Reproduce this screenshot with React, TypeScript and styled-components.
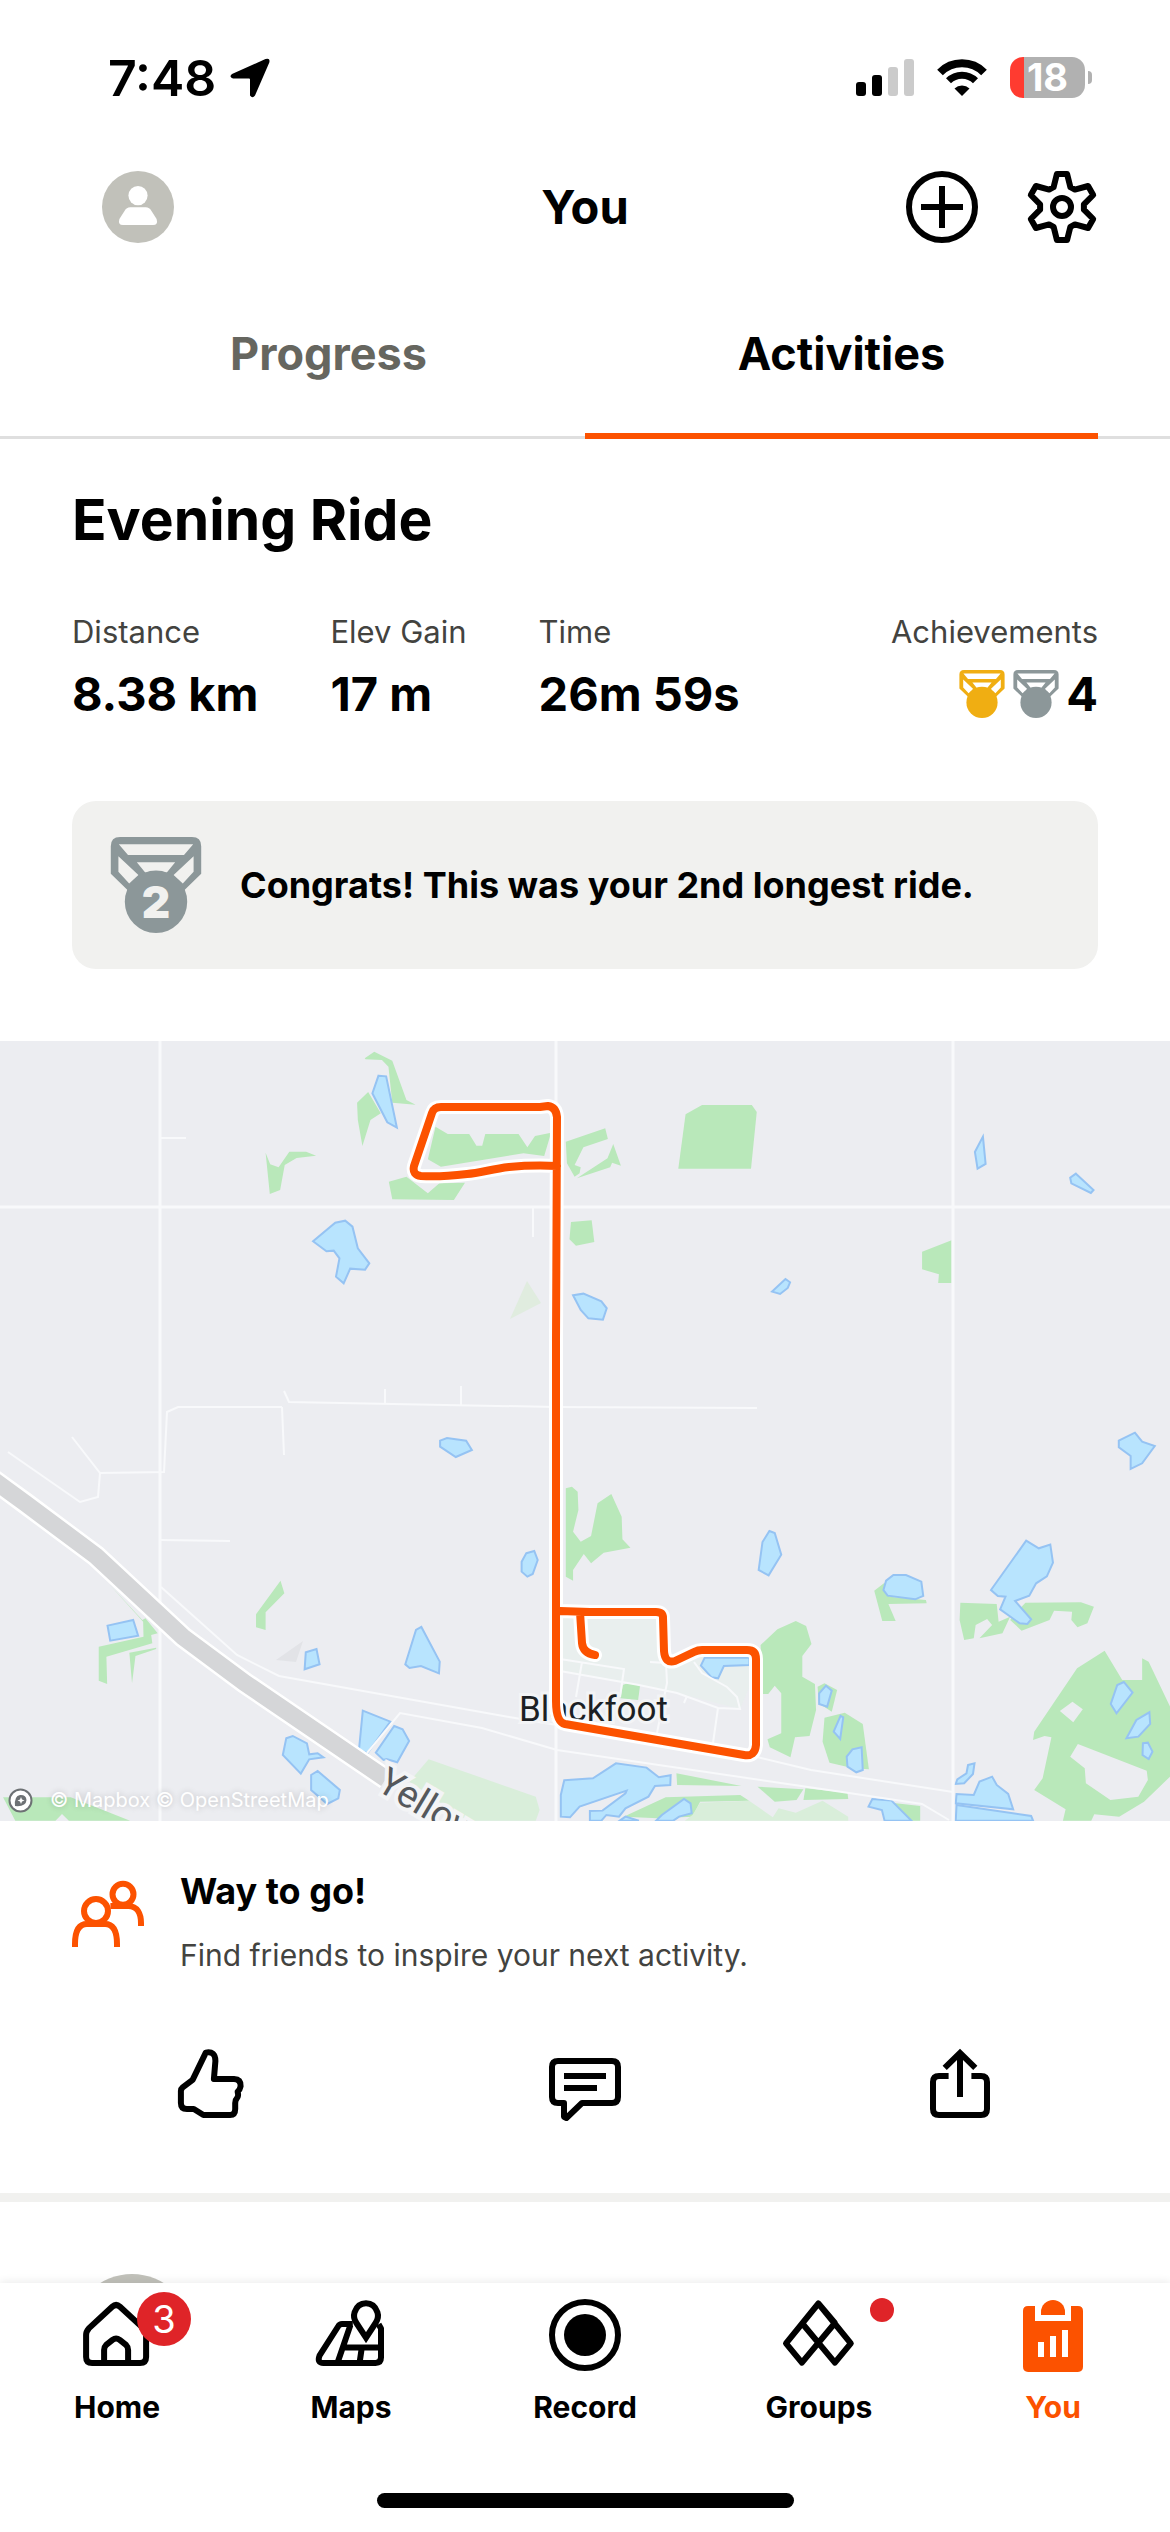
import React from "react";
import styled, { createGlobalStyle } from "styled-components";

const color = {
  ink: "#000000",
  body: "#43433f",
  muted: "#66665f",
  accent: "#fc5200",
  fill: "#f1f1ef",
  line: "#dfdfdf",
  avatar: "#c1c1ba",
  gold: "#f0ae12",
  silver: "#8c9799",
  alert: "#df2428",
};

const GlobalStyle = createGlobalStyle`
  *, *::before, *::after { box-sizing: border-box; }
  body {
    margin: 0;
    background: #fff;
    color: ${color.ink};
    font-family: Inter, Roboto, sans-serif;
  }
  h1, h2, h3, p, dl, dt, dd { margin: 0; }
`;

/* ---------- shell ---------- */

const Shell = styled.div`
  display: flex;
  flex-direction: column;
  height: 100vh;
  overflow: hidden;
  background: #fff;
`;

const Feed = styled.main`
  flex: 1;
  min-height: 0;
  overflow-y: auto;
  scrollbar-width: none;
`;

/* ---------- status bar ---------- */

const StatusBar = styled.div`
  display: flex;
  align-items: center;
  justify-content: space-between;
  height: 141px;
  padding: 14px 78px 0 108px;
`;

const StatusGroup = styled.div`
  display: flex;
  align-items: center;
  gap: ${(p: { $gap: number }) => p.$gap}px;
`;

const Clock = styled.span`
  font-size: 50px;
  line-height: 56px;
  font-weight: 600;
`;

const Battery = styled.div`
  display: flex;
  align-items: center;
  justify-content: center;
  width: 75px;
  height: 41px;
  border-radius: 13px;
  background: linear-gradient(to right, #ff3b30 14px, #b1b1b1 14px);
  color: #fff;
  font-size: 38px;
  line-height: 41px;
  font-weight: 700;
`;

const BatteryTip = styled.span`
  width: 4px;
  height: 13px;
  margin-left: 3px;
  border-radius: 0 6px 6px 0;
  background: #b1b1b1;
`;

const BatteryWrap = styled.div`
  display: flex;
  align-items: center;
`;

/* ---------- header and tabs ---------- */

const Header = styled.header`
  display: grid;
  grid-template-columns: 1fr auto 1fr;
  align-items: center;
  height: 132px;
  padding: 0 72px 0 102px;
`;

const HeaderTitle = styled.h1`
  font-size: 47px;
  line-height: 60px;
  font-weight: 700;
  padding-right: 30px;
`;

const HeaderActions = styled.div`
  display: flex;
  justify-content: flex-end;
  gap: 48px;
`;

const IconButton = styled.button`
  display: inline-flex;
  justify-self: start;
  padding: 0;
  border: 0;
  background: none;
  color: inherit;
  cursor: pointer;
`;

const Tabs = styled.div`
  display: grid;
  grid-template-columns: 1fr 1fr;
  height: 166px;
  padding: 0 72px;
  background: linear-gradient(to top, ${color.line} 3px, transparent 3px);
`;

const Tab = styled.button`
  padding: 0;
  border: 0;
  border-bottom: 6px solid ${(p: { $active?: boolean }) => (p.$active ? color.accent : "transparent")};
  background: none;
  color: ${(p) => (p.$active ? color.ink : color.muted)};
  font-family: inherit;
  font-size: 45px;
  font-weight: 700;
  cursor: pointer;
`;

/* ---------- activity ---------- */

const Summary = styled.section`
  padding: 45px 72px 72px;
`;

const ActivityTitle = styled.h2`
  font-size: 57px;
  line-height: 72px;
  font-weight: 700;
`;

const Stats = styled.dl`
  display: flex;
  gap: 72px;
  margin-top: 56px;
`;

const Stat = styled.div`
  display: flex;
  flex-direction: column;
  gap: 14px;
  align-items: ${(p: { $end?: boolean }) => (p.$end ? "flex-end" : "flex-start")};
  margin-left: ${(p) => (p.$end ? "auto" : "0")};
`;

const StatLabel = styled.dt`
  color: ${color.body};
  font-size: 31px;
  line-height: 40px;
`;

const StatValue = styled.dd`
  display: flex;
  align-items: center;
  gap: 6px;
  font-size: 47px;
  line-height: 56px;
  font-weight: 700;
`;

const Banner = styled.div`
  display: flex;
  align-items: center;
  gap: 36px;
  height: 168px;
  margin-top: 79px;
  padding: 0 36px;
  border-radius: 24px;
  background: ${color.fill};
`;

const BannerText = styled.p`
  font-size: 36px;
  line-height: 48px;
  font-weight: 700;
`;

const MapFrame = styled.figure`
  position: relative;
  margin: 0;
  overflow: hidden;

  > svg {
    display: block;
    width: 100%;
    height: auto;
  }
`;

const Attribution = styled.figcaption`
  position: absolute;
  left: 8px;
  bottom: 7px;
  display: flex;
  align-items: center;
  gap: 17px;
  color: #fff;
  font-size: 20px;
  line-height: 28px;
  text-shadow: 0 0 6px rgba(0, 0, 0, 0.2);
`;

const Prompt = styled.section`
  display: flex;
  gap: 36px;
  padding: 46px 72px 0;
`;

const PromptIcon = styled.span`
  display: flex;
  padding-top: 11px;
  color: ${color.accent};
`;

const PromptCopy = styled.div`
  display: flex;
  flex-direction: column;
  gap: 20px;
`;

const PromptTitle = styled.h3`
  font-size: 36px;
  line-height: 48px;
  font-weight: 700;
`;

const PromptText = styled.p`
  color: ${color.body};
  font-size: 30px;
  line-height: 40px;
`;

const Actions = styled.div`
  display: grid;
  grid-template-columns: repeat(3, 1fr);
  padding: 74px 22px 72px;

  > button {
    justify-self: center;
  }
`;

const Divider = styled.hr`
  height: 9px;
  margin: 0;
  border: 0;
  background: ${color.fill};
`;

const NextCard = styled.section`
  padding: 72px;
`;

const NextAvatar = styled.div`
  width: 120px;
  height: 120px;
  border-radius: 50%;
  background: ${color.avatar};
`;

/* ---------- bottom navigation ---------- */

const BottomBar = styled.footer`
  position: relative;
  background: #fff;
  box-shadow: 0 -2px 8px rgba(0, 0, 0, 0.07);
`;

const NavList = styled.nav`
  display: grid;
  grid-template-columns: repeat(5, 1fr);
  padding-top: 16px;
`;

const NavLink = styled.a`
  display: flex;
  flex-direction: column;
  align-items: center;
  gap: 16px;
  color: ${(p: { $active?: boolean }) => (p.$active ? color.accent : color.ink)};
  font-size: 30px;
  line-height: 40px;
  font-weight: 700;
  text-decoration: none;
`;

const NavIcon = styled.span`
  position: relative;
  display: flex;
`;

const CountBadge = styled.span`
  position: absolute;
  top: -7px;
  left: 56px;
  width: 54px;
  height: 54px;
  border-radius: 50%;
  background: ${color.alert};
  color: #fff;
  font-size: 38px;
  line-height: 54px;
  font-weight: 400;
  text-align: center;
`;

const DotBadge = styled.span`
  position: absolute;
  top: -1px;
  left: 87px;
  width: 24px;
  height: 24px;
  border-radius: 50%;
  background: ${color.alert};
`;

const HomeIndicator = styled.div`
  width: 417px;
  height: 15px;
  margin: 66px auto 24px;
  border-radius: 8px;
  background: #000;
`;

/* ---------- icons ---------- */

function Icon({ size = 72, children }: { size?: number; children: React.ReactNode }) {
  return (
    <svg
      width={size}
      height={size}
      viewBox="0 0 24 24"
      fill="none"
      stroke="currentColor"
      strokeWidth={2}
      strokeLinejoin="round"
      overflow="visible"
      aria-hidden="true"
    >
      {children}
    </svg>
  );
}

const PlusIcon = () => (
  <Icon>
    <circle cx="12" cy="12" r="11" />
    <path d="M12 5V19M5 12H19" />
  </Icon>
);

const GearIcon = () => (
  <Icon>
    <path d="M10.3 1H13.7L14.8 5.4L16.3 6.2L20.7 5L22.4 8L19.3 11.1V12.9L22.4 16L20.7 19L16.3 17.8L14.8 18.6L13.7 23H10.3L9.2 18.6L7.7 17.8L3.3 19L1.6 16L4.7 12.9V11.1L1.6 8L3.3 5L7.7 6.2L9.2 5.4Z" />
    <circle cx="12" cy="12" r="3" />
  </Icon>
);

const AvatarIcon = () => (
  <Icon>
    <g stroke="none">
      <circle cx="12" cy="12" r="12" fill={color.avatar} />
      <circle cx="12" cy="8.2" r="3.2" fill="#fff" />
      <path d="M9.4 12.1H14.6Q15.8 12.1 16.5 13.3L18.2 16Q18.8 18 17 18H7Q5.2 18 5.8 16L7.5 13.3Q8.2 12.1 9.4 12.1Z" fill="#fff" />
    </g>
  </Icon>
);

function Medal({ size, fill, rank }: { size: number; fill: string; rank?: number }) {
  return (
    <Icon size={size}>
      <g stroke="none" fill={fill}>
        <path
          fillRule="evenodd"
          d="M3 0H21Q23.3 0 23.3 2.3V9.2L19 13.4H5L.7 9.2V2.3Q.7 0 3 0ZM2.7 1.8L5 4.5H19L21.3 1.8ZM2.6 4.8V8.7L5.3 11.6L7.6 9.5ZM21.4 4.8V8.7L18.7 11.6L16.4 9.5ZM7.2 6.3L9.3 8.9H14.7L16.8 6.3Z"
        />
        <circle cx="12" cy="16.2" r="7.8" />
        {rank !== undefined && (
          <text x="12" y="20.3" textAnchor="middle" fontSize="11" fontWeight="900" fill={color.fill}>
            {rank}
          </text>
        )}
      </g>
    </Icon>
  );
}

const FriendsIcon = () => (
  <Icon>
    <circle cx="8" cy="11" r="4" />
    <circle cx="17" cy="5.4" r="3.5" />
    <path d="M1 23V22C1 18 2.2 15.3 5 15.3H11C13.8 15.3 15 18 15 22V23" />
    <path d="M12.8 9.3H18.8C21.8 9.3 23 12 23 15V16" />
  </Icon>
);

const KudosIcon = () => (
  <Icon>
    <path d="M10.6 1.2Q13.8.6 13.8 4L13.3 10H20Q22.3 10.1 22.2 12.4Q22 13.6 21.2 14.2Q21.6 15.8 21 16.4Q20.4 17 20.4 18V20Q20.4 22 18.7 22H9.8L6.6 20H4.3Q2.3 20 2.3 18V14Q2.3 13.3 2.9 12.8L6.2 10.3Z" />
  </Icon>
);

const CommentIcon = () => (
  <Icon>
    <path d="M3 4H21Q23 4 23 6V16Q23 18 21 18H11L5.8 23L5 22.6V18H3Q1 18 1 16V6Q1 4 3 4Z" />
    <path d="M5 9H19M5 13H16" />
  </Icon>
);

const ShareIcon = () => (
  <Icon>
    <path d="M8.2 9H5Q3 9 3 11V20Q3 22 5 22H19Q21 22 21 20V11Q21 9 19 9H15.8" />
    <path d="M12 16V1.5M6.9 6.3L12 1.3L17.1 6.3" strokeLinejoin="miter" />
  </Icon>
);

const HomeIcon = () => (
  <Icon>
    <path d="M1.7 12Q1.7 10.8 2.6 9.8L10.4 2.6Q11.7 1.4 13 2.6L20.8 9.8Q21.7 10.8 21.7 12V19.3Q21.7 21.3 19.7 21.3H3.7Q1.7 21.3 1.7 19.3Z" />
    <path d="M7.7 21V17Q7.7 16 8.4 15.3L10.5 13.6Q11.7 12.7 12.9 13.6L15 15.3Q15.7 16 15.7 17V21" />
  </Icon>
);

const MapsIcon = () => (
  <Icon>
    <path d="M17 12.9L13.8 8Q12.6 6.2 13.2 4.4Q14.2 1.4 17 1.4Q19.8 1.4 20.8 4.4Q21.4 6.2 20.2 8Z" strokeLinejoin="miter" />
    <path d="M12.6 8.3H9Q8.2 8.3 7.8 9L1.5 18.9Q.6 21.3 2.8 21.3H20.2Q22 21.3 22 19.5V9.8L21.2 8.4" />
    <path d="M11.8 8.7L7.6 21M9.6 16.2H22M15.6 16.2L14.9 21" />
  </Icon>
);

const RecordIcon = () => (
  <Icon>
    <circle cx="12" cy="12" r="11" />
    <circle cx="12" cy="12" r="7" fill="currentColor" stroke="none" />
  </Icon>
);

const GroupsIcon = () => (
  <Icon>
    <path d="M11.8 1.5L22.6 14.8L17.3 21.2L6.3 8M17.3 8L6.3 21.2L1 14.8L11.8 1.5Z" />
  </Icon>
);

const ProfileIcon = () => (
  <Icon>
    <g stroke="none" fill="currentColor">
      <path d="M3.7 2.3H6V7.3H18V2.3H20.3Q22 2.3 22 4V22.6Q22 24.3 20.3 24.3H3.7Q2 24.3 2 22.6V4Q2 2.3 3.7 2.3Z" />
      <path d="M8 5.3V4.3A4 4 0 0 1 16 4.3V5.3Z" />
      <path d="M7 14.3H9V19.3H7ZM11 12.3H13V19.3H11ZM15 10.3H17V19.3H15Z" fill="#fff" />
    </g>
  </Icon>
);

const LocationArrow = () => (
  <svg width="40" height="40" viewBox="0 0 40 40" aria-hidden="true">
    <path d="M35.500 1Q40.500 -.5 39.300 4.500L25 37.500Q22.500 41 20 37.500V21.500Q20 20.500 19 20.500H3Q-1.500 19 2 16Z" />
  </svg>
);

const SignalIcon = () => (
  <svg width="58" height="37" viewBox="0 0 58 37" aria-hidden="true">
    <rect x="0" y="23" width="10" height="14" rx="3" />
    <rect x="16" y="16" width="10" height="21" rx="3" />
    <rect x="32" y="8" width="10" height="29" rx="3" fill="#cbcbcb" />
    <rect x="48" y="0" width="10" height="37" rx="3" fill="#cbcbcb" />
  </svg>
);

const WifiIcon = () => (
  <svg width="50" height="37" viewBox="0 0 50 37" fill="none" stroke="#000" aria-hidden="true">
    <path d="M3 13.500A31 31 0 0 1 47 13.500" strokeWidth="8" />
    <path d="M11.500 21.800A19 19 0 0 1 38.500 21.800" strokeWidth="7" />
    <path d="M17.500 29.500A11 11 0 0 1 32.500 29.500L25 37Z" fill="#000" stroke="none" />
  </svg>
);

const MapboxMark = () => (
  <svg width="25" height="25" viewBox="0 0 25 25" aria-hidden="true">
    <circle cx="12.500" cy="12.500" r="11" fill="#fff" stroke="#6d7174" strokeWidth="2" />
    <path d="M7 18Q6 8 12 7Q18 6.500 18.500 12Q18 19 7 18Z" fill="#6d7174" />
    <path d="M13 9L14 11.500L16.500 12.500L14 13.500L13 16L12 13.500L9.500 12.500L12 11.500Z" fill="#fff" />
  </svg>
);

/* ---------- map ---------- */

/* The terrain is stored in four tiles, each digitised on its own grid. */
const tiles = [
  {
    place: "translate(0 -11) scale(.3827 .3333)",
    parks: [
      "953,85 978,65 1025,92 1062,210 1086,224 1025,218 1015,110 998,90 955,88",
      "962,186 933,218 935,270 947,348 968,270 995,250",
      "694,368 706,403 728,412 756,365 800,365 826,377 775,384 744,405 732,480 705,492",
      "1138,290 1170,312 1226,312 1245,347 1260,347 1268,312 1355,312 1378,352 1398,318 1440,308 1422,378 1368,370 1152,410 1118,388",
      "1016,455 1062,440 1118,490 1148,460 1215,458 1186,510 1025,508",
      "1492,576 1546,571 1553,636 1505,647 1488,628",
    ],
    meadows: [],
    clearings: [],
    water: [
      "989,137 1009,139 1037,293 1012,277 973,190",
      "818,634 876,578 902,572 921,590 935,655 965,700 954,719 915,716 898,760 878,740 887,685 872,662 853,664",
    ],
  },
  {
    place: "translate(570 -11) scale(.3827 .3333)",
    parks: [
      "-11,335 92,295 99,327 35,352 12,405 28,412 25,430 12,440 -8,400",
      "18,445 98,385 113,342 133,407 110,398 105,412",
      "302,253 345,225 475,225 488,246 473,416 283,416",
      "920,665 997,631 997,759 962,759 964,733 920,718",
    ],
    meadows: [],
    clearings: [],
    water: [
      "8,796 35,791 82,814 96,835 86,869 48,865 28,840",
      "563,747 575,757 569,774 549,792 528,785",
      "1079,320 1086,402 1065,416 1058,366",
      "1322,431 1368,480 1361,489 1310,460 1307,443",
    ],
  },
  {
    place: "translate(0 379) scale(.3827 .3333)",
    parks: [
      "283,490 372,600 380,595 412,640 395,645 398,670 278,710 280,792 258,782 258,680 375,650 374,605",
      "338,698 408,683 408,687 354,708 345,790",
      "733,482 743,520 694,577 694,630 669,622 669,583",
      "8,1132 185,1132 340,1202 180,1202 162,1182 145,1202 40,1202",
    ],
    meadows: ["1120,1018 1400,1130 1410,1170 1400,1202 1220,1202 1070,1085"],
    clearings: [],
    water: [
      "1150,62 1168,54 1218,62 1233,90 1191,111 1150,80",
      "1375,400 1396,393 1405,420 1392,462 1378,470 1363,455 1363,425",
      "281,617 348,600 361,647 288,662",
      "827,687 835,733 796,748 799,697",
      "1087,630 1101,621 1149,725 1147,760 1100,738 1070,744 1059,733",
      "948,872 1020,905 960,1000 938,990",
      "1030,918 1052,928 1069,963 1038,1027 1010,1017 1002,1020 982,998",
      "748,955 765,948 802,970 808,1003 830,1000 845,1012 808,1018 786,1061 739,1005",
      "830,1053 888,1110 884,1135 855,1152 813,1110 813,1065",
    ],
  },
  {
    place: "translate(570 379) scale(.3827 .3333)",
    parks: [
      "-11,205 5,200 20,215 22,270 8,335 28,365 55,348 72,250 108,222 135,290 137,358 158,383 88,398 55,430 36,402 8,450 8,482 -11,470",
      "498,675 542,628 590,603 617,618 631,672 607,708 607,770 640,792 643,870 626,948 588,952 576,1012 522,982 516,958 552,940 552,820 535,797 518,822 503,822",
      "647,800 665,790 698,810 684,875 650,850",
      "665,893 718,878 765,912 781,1048 740,1045 678,1028 660,965",
      "795,512 822,488 835,530 930,540 932,550 832,552 851,603 816,603",
      "1020,548 1115,552 1120,605 1150,590 1130,640 1070,655 1103,615 1090,597 1060,615 1055,655 1030,660 1018,600",
      "1190,548 1335,547 1369,560 1352,610 1326,622 1310,600 1312,575 1265,572 1253,600 1180,632 1150,600 1180,560",
      "1397,692 1443,780 1495,780 1495,715 1512,725 1568,860 1568,1070 1500,1145 1435,1190 1370,1183 1362,1202 1288,1202 1295,1168 1213,1110 1235,1075 1258,952 1240,948 1210,960 1213,935 1325,745",
      "138,795 150,790 183,797 178,840 132,835",
      "278,1060 448,1098 280,1095",
      "490,1100 610,1108 592,1140 535,1145",
      "615,1105 725,1118 727,1137 610,1140",
      "250,1132 445,1125 468,1142 340,1145 320,1190 230,1195 140,1190",
      "840,1148 915,1158 915,1202 892,1202",
    ],
    meadows: ["340,1148 468,1142 530,1192 545,1165 590,1178 660,1142 727,1190 727,1202 300,1202 320,1185"],
    clearings: [
      "1280,873 1313,845 1340,868 1315,907",
      "1327,972 1507,1052 1510,1080 1485,1130 1412,1140 1348,1090 1345,1045 1307,1010",
    ],
    water: [
      "-15,1081 60,1075 120,1030 200,1043 232,1072 263,1066 262,1095 222,1098 205,1130 145,1165 128,1190 95,1185 82,1202 52,1202 52,1173 85,1172 145,1120 148,1112 25,1160 0,1192 -24,1190 -24,1125",
      "225,1202 240,1185 298,1137 315,1150 318,1180 285,1190 270,1202",
      "130,1202 145,1190 180,1202",
      "521,333 535,339 552,404 519,466 493,450 503,366",
      "845,465 878,465 918,485 923,528 902,538 830,527 819,510 826,482",
      "1192,362 1225,385 1255,374 1262,428 1246,469 1218,490 1200,527 1163,543 1205,598 1195,612 1175,610 1124,568 1138,530 1118,528 1100,510",
      "1476,38 1495,65 1528,78 1495,130 1465,147 1465,108 1434,82 1434,62",
      "352,713 469,713 469,735 402,738 387,775 370,772 342,737",
      "669,797 684,812 672,860 651,852 651,820",
      "707,888 714,892 706,957 689,935",
      "762,982 765,1050 748,1057 725,1040 723,1010 738,988",
      "1447,786 1470,818 1428,880 1413,852 1430,795",
      "1514,877 1516,912 1485,950 1454,955 1480,900",
      "1497,970 1510,968 1522,995 1512,1017 1496,1005",
      "1040,1035 1057,1030 1053,1062 1030,1090 1008,1092 1012,1078 1036,1060",
      "1103,1070 1115,1095 1145,1122 1158,1168 1008,1150 1010,1122 1055,1125 1070,1085",
      "1010,1155 1205,1188 1210,1202 1008,1202",
      "790,1137 840,1142 892,1202 822,1202 815,1170 780,1160",
    ],
  },
];

const minorRoads =
  "M160 97H186M533 166V196M284 350L289 361L556 366L757 367M385 348V362M461 345V364" +
  "M282 366L178 366L167 371L164 431L100 432L72 396M100 432L98 456L80 461L8 411M282 366L284 414" +
  "M160 499L230 500M161 546L237 614L279 635L509 676L557 684" +
  "M367 712L400 672L482 687L557 709L849 752L922 763L949 779M757 716L811 729L953 751" +
  "M560 618L624 628L620 656M560 630L639 644L677 652L718 667L740 668L737 656L727 646L702 632L694 621" +
  "M650 621L666 622L667 642L657 692M718 667L713 702M582 621L576 656M687 655L684 662";

const mainRoads = "M160 0V780M556 0V780M953 0V780M0 166H1170";

const highway = "M-12 435L25 462L96 515L183 596L245 642L386 738";

const route =
  "M557 125C535 124 520 125 509 126C492 128 480 132 467 133C450 135 435 136 421 135Q412 134 414 125L432 72Q434 66 441 66L540 66L548 65Q556 66 557 76L556 300L556 566V660" +
  "Q556 681 565 683L744 714Q755 716 756 704V618Q756 609 747 609H702Q698 609 694 611L675 620Q665 623 664 610L663 577Q663 571 656 571L590 571L560 570" +
  "M580 571L582 602Q583 612 595 614";

function RouteMap() {
  return (
    <svg viewBox="0 0 1170 780" fill="none" role="img" aria-label="Route map">
      <rect width="1170" height="780" fill="#ecedf1" />
      <path d="M560 574H660V620L694 611L752 612V640L740 668L677 652L560 630Z" fill="#e9efee" />
      <path d="M527 240L541 262L510 278Z" fill="#e0ecdf" />
      <path d="M276 619L303 600L296 621Z" fill="#e2e3e7" />
      {tiles.map((tile) => (
        <g key={tile.place} transform={tile.place}>
          {tile.parks.map((points) => (
            <polygon key={points} points={points} fill="#b9e8ba" />
          ))}
          {tile.meadows.map((points) => (
            <polygon key={points} points={points} fill="#d9eeda" />
          ))}
          {tile.clearings.map((points) => (
            <polygon key={points} points={points} fill="#ecedf1" />
          ))}
          {tile.water.map((points) => (
            <polygon
              key={points}
              points={points}
              fill="#b8e4fe"
              stroke="#95c3f3"
              strokeWidth="2"
              vectorEffect="non-scaling-stroke"
            />
          ))}
        </g>
      ))}
      <path d={minorRoads} stroke="#f8f9fb" strokeWidth="2" />
      <path d={mainRoads} stroke="#f8f9fb" strokeWidth="3" />
      <path d={highway} stroke="#fff" strokeWidth="22" />
      <path d={highway} stroke="#d5d6d8" strokeWidth="17" />
      <text
        transform="translate(375 748) rotate(31)"
        fill="#55585c"
        stroke="#f3f4f6"
        strokeWidth="8"
        paintOrder="stroke"
        fontFamily="Roboto, sans-serif"
        fontSize="38"
      >
        Yellow
      </text>
      <text
        x="519"
        y="680"
        fill="#1c1f24"
        stroke="#f3f4f6"
        strokeWidth="6"
        paintOrder="stroke"
        fontFamily="Roboto, sans-serif"
        fontSize="35"
      >
        Blackfoot
      </text>
      <g strokeLinecap="round" strokeLinejoin="round">
        <path d={route} stroke="#fff" strokeWidth="14" />
        <path d={route} stroke={color.accent} strokeWidth="8" />
      </g>
    </svg>
  );
}

/* ---------- page ---------- */

const stats = [
  { label: "Distance", value: "8.38 km" },
  { label: "Elev Gain", value: "17 m" },
  { label: "Time", value: "26m 59s" },
];

const navItems = [
  { label: "Home", icon: <HomeIcon />, count: 3 },
  { label: "Maps", icon: <MapsIcon /> },
  { label: "Record", icon: <RecordIcon /> },
  { label: "Groups", icon: <GroupsIcon />, dot: true },
  { label: "You", icon: <ProfileIcon />, active: true },
];

export default function App() {
  return (
    <Shell>
      <GlobalStyle />
      <StatusBar>
        <StatusGroup $gap={14}>
          <Clock>7:48</Clock>
          <LocationArrow />
        </StatusGroup>
        <StatusGroup $gap={23}>
          <SignalIcon />
          <WifiIcon />
          <BatteryWrap>
            <Battery>18</Battery>
            <BatteryTip />
          </BatteryWrap>
        </StatusGroup>
      </StatusBar>

      <Header>
        <IconButton aria-label="Profile">
          <AvatarIcon />
        </IconButton>
        <HeaderTitle>You</HeaderTitle>
        <HeaderActions>
          <IconButton aria-label="Add">
            <PlusIcon />
          </IconButton>
          <IconButton aria-label="Settings">
            <GearIcon />
          </IconButton>
        </HeaderActions>
      </Header>

      <Tabs role="tablist">
        <Tab role="tab" aria-selected={false}>Progress</Tab>
        <Tab role="tab" aria-selected $active>Activities</Tab>
      </Tabs>

      <Feed>
        <Summary>
          <ActivityTitle>Evening Ride</ActivityTitle>
          <Stats>
            {stats.map((s) => (
              <Stat key={s.label}>
                <StatLabel>{s.label}</StatLabel>
                <StatValue>{s.value}</StatValue>
              </Stat>
            ))}
            <Stat $end>
              <StatLabel>Achievements</StatLabel>
              <StatValue>
                <Medal size={48} fill={color.gold} />
                <Medal size={48} fill={color.silver} />
                4
              </StatValue>
            </Stat>
          </Stats>
          <Banner>
            <Medal size={96} fill={color.silver} rank={2} />
            <BannerText>Congrats! This was your 2nd longest ride.</BannerText>
          </Banner>
        </Summary>

        <MapFrame>
          <RouteMap />
          <Attribution>
            <MapboxMark />
            © Mapbox © OpenStreetMap
          </Attribution>
        </MapFrame>

        <Prompt>
          <PromptIcon>
            <FriendsIcon />
          </PromptIcon>
          <PromptCopy>
            <PromptTitle>Way to go!</PromptTitle>
            <PromptText>Find friends to inspire your next activity.</PromptText>
          </PromptCopy>
        </Prompt>

        <Actions>
          <IconButton aria-label="Give kudos">
            <KudosIcon />
          </IconButton>
          <IconButton aria-label="Comment">
            <CommentIcon />
          </IconButton>
          <IconButton aria-label="Share">
            <ShareIcon />
          </IconButton>
        </Actions>

        <Divider />

        <NextCard>
          <NextAvatar />
        </NextCard>
      </Feed>

      <BottomBar>
        <NavList>
          {navItems.map((item) => (
            <NavLink key={item.label} href="#" $active={item.active}>
              <NavIcon>
                {item.icon}
                {item.count && <CountBadge>{item.count}</CountBadge>}
                {item.dot && <DotBadge />}
              </NavIcon>
              {item.label}
            </NavLink>
          ))}
        </NavList>
        <HomeIndicator />
      </BottomBar>
    </Shell>
  );
}
